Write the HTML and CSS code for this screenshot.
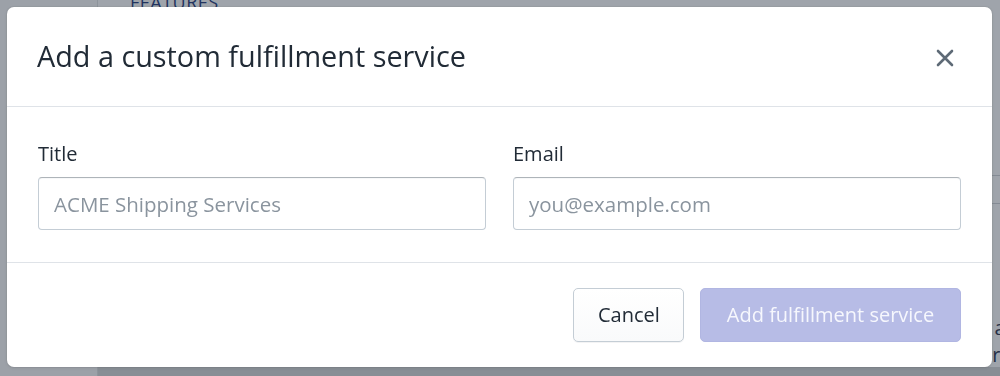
FILE: index.html
```html
<!DOCTYPE html>
<html lang="en">
<head>
<meta charset="utf-8">
<title>Add a custom fulfillment service</title>
<link rel="stylesheet" href="styles.css">
</head>
<body>
<div class="page">
  <aside class="sidebar"></aside>
  <main class="main">
    <h2 class="section-title">Features</h2>
    <div class="rows">
      <div class="row"></div>
      <div class="row"></div>
    </div>
    <p class="bottom-text">
      <span class="line">Connect a fulfillment service to ship orders from your warehouse and keep inventory in sync across every location a</span>
      <span class="line">Manage shipping, packaging, tracking and returns using your own technology, strategy and processes for every order</span>
    </p>
  </main>
</div>

<div class="backdrop">
  <div class="modal" role="dialog" aria-labelledby="modal-title">
    <header class="modal-header">
      <h1 id="modal-title" class="modal-title">Add a custom fulfillment service</h1>
      <button class="close" type="button" aria-label="Close">
        <svg viewBox="0 0 20 20" width="20" height="20" aria-hidden="true">
          <path d="M3 3 L17 17 M17 3 L3 17" stroke="#5e6a76" stroke-width="2.6" stroke-linecap="round" fill="none"/>
        </svg>
      </button>
    </header>
    <section class="modal-body">
      <div class="field">
        <label class="label" for="title">Title</label>
        <input class="input" id="title" type="text" placeholder="ACME Shipping Services">
      </div>
      <div class="field">
        <label class="label" for="email">Email</label>
        <input class="input" id="email" type="email" placeholder="you@example.com">
      </div>
    </section>
    <footer class="modal-footer">
      <button class="btn btn-secondary" type="button">Cancel</button>
      <button class="btn btn-primary" type="button" disabled>Add fulfillment service</button>
    </footer>
  </div>
</div>
</body>
</html>
```
FILE: styles.css
```css
* { box-sizing: border-box; }

html, body {
  margin: 0;
  padding: 0;
  height: 376px;
  overflow: hidden;
}

body {
  font-family: "Open Sans", "Noto Sans", "Liberation Sans", sans-serif;
  color: #212b36;
}

/* underlying page */
.page {
  display: grid;
  grid-template-columns: 98px 1fr;
  height: 376px;
  background: linear-gradient(to bottom, #f4f6f8 0, #f4f6f8 367px, #cdd0d4 367px);
}

.sidebar {
  background: #eef0f3;
  border-right: 1px solid #d6dade;
}

.main {
  display: flex;
  flex-direction: column;
  padding-left: 32px;
  overflow: hidden;
}

.section-title {
  margin: -10px 0 0;
  font-size: 18px;
  line-height: 24px;
  font-weight: 500;
  letter-spacing: 0.5px;
  text-transform: uppercase;
  color: #233a7a;
}

.rows {
  display: flex;
  flex-direction: column;
  gap: 27px;
  margin-top: 161px;
}

.row {
  height: 1px;
  background: #c7ccd2;
}

.bottom-text {
  margin: auto 0 8px;
  font-size: 20px;
  line-height: 27px;
  white-space: nowrap;
  color: #2a3550;
}

.line {
  display: block;
}

/* overlay + modal */
.backdrop {
  position: fixed;
  inset: 0;
  background: rgba(33, 43, 54, 0.4);
  padding: 7px 8px 9px 7px;
  display: flex;
}

.modal {
  width: 985px;
  height: 360px;
  background: #fff;
  border-radius: 7px;
  box-shadow: 0 0 0 1px rgba(63, 63, 68, 0.05), 0 1px 3px rgba(63, 63, 68, 0.15);
  display: flex;
  flex-direction: column;
}

.modal-header {
  height: 100px;
  flex: none;
  display: flex;
  align-items: center;
  justify-content: space-between;
  padding: 0 37px 2px 30px;
  border-bottom: 1px solid #dfe3e8;
}

.modal-title {
  margin: 0;
  font-size: 28.8px;
  font-weight: 400;
  color: #212b36;
}

.close {
  border: 0;
  background: none;
  padding: 0;
  width: 20px;
  height: 20px;
  margin-top: 4px;
  display: flex;
  cursor: pointer;
}

.modal-body {
  flex: none;
  height: 156px;
  display: grid;
  grid-template-columns: 1fr 1fr;
  column-gap: 27px;
  padding: 33px 31px 0;
  border-bottom: 1px solid #dfe3e8;
}

.field {
  display: flex;
  flex-direction: column;
}

.label {
  font-size: 20px;
  line-height: 28px;
  margin-bottom: 9px;
  color: #212b36;
}

.input {
  height: 53px;
  width: 100%;
  padding: 0 15px;
  font: inherit;
  font-size: 20.5px;
  color: #212b36;
  background: #fff;
  border: 1px solid #c4cdd5;
  border-top-color: #aeb4b9;
  border-radius: 4px;
  box-shadow: inset 0 1px 0 0 rgba(99, 115, 129, 0.05);
  outline: none;
}

.input::placeholder {
  color: #8a949e;
}

.modal-footer {
  flex: 1;
  display: flex;
  align-items: center;
  justify-content: flex-end;
  gap: 16px;
  padding: 0 31px 1px;
}

.btn {
  height: 54px;
  font: inherit;
  font-size: 20px;
  border-radius: 5px;
  padding: 0 24px;
  cursor: pointer;
}

.btn-secondary {
  width: 111px;
  background: linear-gradient(to bottom, #fff, #f9fafb);
  border: 1px solid #c4cdd5;
  box-shadow: 0 1px 0 0 rgba(22, 29, 37, 0.05);
  color: #212b36;
}

.btn-primary {
  width: 261px;
  background: #b7bce6;
  border: 1px solid #b1b6e2;
  color: #f6f7fd;
}
```
